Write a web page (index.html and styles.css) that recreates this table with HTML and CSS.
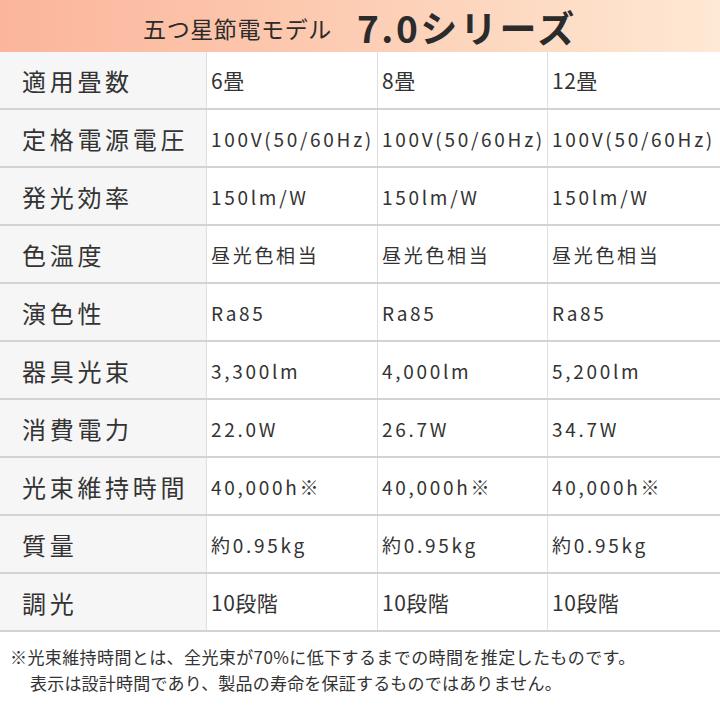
FILE: index.html
```html
<!DOCTYPE html>
<html lang="ja">
<head>
<meta charset="utf-8">
<link rel="stylesheet" href="styles.css">
</head>
<body>
<div class="page">
  <header class="banner">
    <span class="banner-sub">五つ星節電モデル</span>
    <span class="banner-main">7.0シリーズ</span>
  </header>
  <div class="spec">
    <div class="row">
      <div class="label">適用畳数</div>
      <div class="val narrow">6畳</div>
      <div class="val narrow">8畳</div>
      <div class="val narrow">12畳</div>
    </div>
    <div class="row">
      <div class="label">定格電源電圧</div>
      <div class="val">100V(50/60Hz)</div>
      <div class="val">100V(50/60Hz)</div>
      <div class="val">100V(50/60Hz)</div>
    </div>
    <div class="row">
      <div class="label">発光効率</div>
      <div class="val">150lm/W</div>
      <div class="val">150lm/W</div>
      <div class="val">150lm/W</div>
    </div>
    <div class="row">
      <div class="label">色温度</div>
      <div class="val">昼光色相当</div>
      <div class="val">昼光色相当</div>
      <div class="val">昼光色相当</div>
    </div>
    <div class="row">
      <div class="label">演色性</div>
      <div class="val">Ra85</div>
      <div class="val">Ra85</div>
      <div class="val">Ra85</div>
    </div>
    <div class="row">
      <div class="label">器具光束</div>
      <div class="val">3,300lm</div>
      <div class="val">4,000lm</div>
      <div class="val">5,200lm</div>
    </div>
    <div class="row">
      <div class="label">消費電力</div>
      <div class="val">22.0W</div>
      <div class="val">26.7W</div>
      <div class="val">34.7W</div>
    </div>
    <div class="row">
      <div class="label">光束維持時間</div>
      <div class="val">40,000h※</div>
      <div class="val">40,000h※</div>
      <div class="val">40,000h※</div>
    </div>
    <div class="row">
      <div class="label">質量</div>
      <div class="val">約0.95kg</div>
      <div class="val">約0.95kg</div>
      <div class="val">約0.95kg</div>
    </div>
    <div class="row">
      <div class="label">調光</div>
      <div class="val narrow">10段階</div>
      <div class="val narrow">10段階</div>
      <div class="val narrow">10段階</div>
    </div>
  </div>
  <div class="note">
    <p class="note-line">※光束維持時間とは、全光束が70%に低下するまでの時間を推定したものです。</p>
    <p class="note-line indent">表示は設計時間であり、製品の寿命を保証するものではありません。</p>
  </div>
</div>
</body>
</html>
```

FILE: styles.css
```css
html, body {
  margin: 0;
  padding: 0;
  background: #ffffff;
}
body {
  font-family: "Noto Sans CJK JP", "Noto Sans", sans-serif;
  color: #333333;
}
.page {
  width: 720px;
}
.banner {
  height: 52px;
  background: linear-gradient(to right, #fbb59c 0%, #fcc8ae 40%, #fee9d4 100%);
  display: flex;
  align-items: center;
  justify-content: center;
  gap: 25px;
  color: #2b2b2b;
}
.banner-sub {
  font-size: 23px;
  letter-spacing: 0.6px;
  line-height: 30px;
  padding-top: 3px;
}
.banner-main {
  font-size: 37px;
  font-weight: 700;
  letter-spacing: 2.6px;
  line-height: 52px;
  padding-top: 1px;
}
.spec {
  display: flex;
  flex-direction: column;
}
.row {
  display: grid;
  grid-template-columns: 207px 171px 170px 172px;
  height: 58px;
  box-sizing: border-box;
  border-bottom: 2px solid #d3d3d3;
}
.label {
  background: #f6f6f6;
  border-right: 1px solid #dedede;
  font-size: 24px;
  letter-spacing: 3.7px;
  padding-left: 22px;
  display: flex;
  align-items: center;
  white-space: nowrap;
  color: #333333;
}
.val {
  border-right: 1px solid #dedede;
  font-size: 19px;
  letter-spacing: 2.7px;
  padding-left: 4px;
  display: flex;
  align-items: center;
  white-space: nowrap;
  color: #333333;
}
.val:last-child {
  border-right: none;
}
.narrow {
  font-size: 21px;
  letter-spacing: 0.5px;
}
.note {
  padding: 12px 0 0 10px;
}
.note-line {
  margin: 0;
  font-size: 17px;
  line-height: 26px;
  letter-spacing: 0.4px;
  white-space: nowrap;
  color: #333333;
}
.indent {
  padding-left: 20px;
  letter-spacing: 0.2px;
}
```
